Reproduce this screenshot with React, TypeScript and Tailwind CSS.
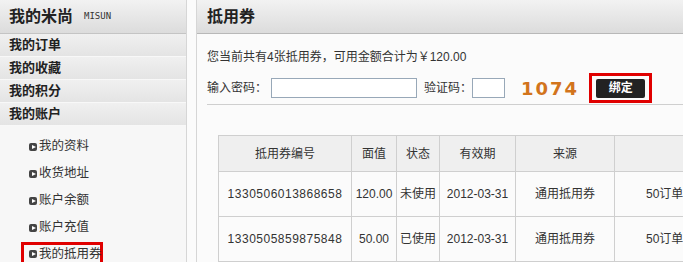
import React from "react";

const cn = '"Liberation Sans", "Noto Sans CJK SC", sans-serif';

function Bullet() {
  return (
    <span className="inline-flex items-center justify-center w-[8px] h-[8px] rounded-[2px] bg-[#444] mr-[2px] shrink-0">
      <span className="block w-0 h-0 border-y-[2.5px] border-y-transparent border-l-[4px] border-l-white ml-[1px]" />
    </span>
  );
}

function App() {
  const menus = ["我的订单", "我的收藏", "我的积分", "我的账户"];
  const subs = ["我的资料", "收货地址", "账户余额", "账户充值"];
  const rows = [
    ["1330506013868658", "120.00", "未使用", "2012-03-31", "通用抵用券", "50订单满"],
    ["1330505859875848", "50.00", "已使用", "2012-03-31", "通用抵用券", "50订单满"],
  ];

  return (
    <div className="flex h-[262px] w-[683px] overflow-hidden bg-[#fbfbfb] text-[#333]" style={{ fontFamily: cn }}>
      {/* Sidebar */}
      <div className="w-[187px] shrink-0 bg-[#f7f7f7] border-r border-[#d6d6d6]">
        <div className="h-[34px] flex items-center px-[9px] bg-gradient-to-b from-[#f2f2f2] to-[#dcdcdc] border-b border-[#c4c4c4]">
          <span className="text-[16px] font-bold text-[#222]">我的米尚</span>
          <span className="ml-[11px] text-[9px] text-[#333]" style={{ fontFamily: '"DejaVu Sans Mono", monospace' }}>MISUN</span>
        </div>
        {menus.map((m) => (
          <div
            key={m}
            className="h-[23px] flex items-center px-[9px] bg-gradient-to-b from-[#f0f0f0] to-[#e4e4e4] border-b border-[#f8f8f8] text-[13px] font-bold text-[#222]"
          >
            {m}
          </div>
        ))}
        <div className="pt-[7px] pl-[29px]">
          {subs.map((s) => (
            <div key={s} className="h-[27px] flex items-center text-[12.5px] text-[#333]">
              <Bullet />
              {s}
            </div>
          ))}
          <div className="-ml-[8px] mt-[1px] w-[82px] h-[24px] border-[3px] border-[#e00000] flex items-center pl-[5px] text-[12.5px] text-[#333] whitespace-nowrap">
            <Bullet />
            我的抵用券
          </div>
        </div>
      </div>

      <div className="w-[10px] shrink-0 bg-[#fbfbfb] border-r border-[#d6d6d6]" />

      {/* Main */}
      <div className="flex-1 min-w-0 overflow-hidden">
        <div className="h-[34px] flex items-center px-[10px] bg-gradient-to-b from-[#f2f2f2] to-[#dcdcdc] border-b border-[#b8b8b8]">
          <span className="text-[16px] font-bold text-[#222]">抵用券</span>
        </div>
        <div className="pl-[10px]">
          <div className="mt-[14px] text-[12px] text-[#333]">您当前共有4张抵用券，可用金额合计为￥120.00</div>
          <div className="mt-[12px] flex items-center h-[20px] text-[12px]">
            <span>输入密码：</span>
            <input className="ml-[4px] w-[146px] h-[20px] border border-[#98a8b8] bg-white" />
            <span className="ml-[7px]">验证码：</span>
            <input className="w-[33px] h-[20px] border border-[#98a8b8] bg-white" />
            <span className="ml-[16px] text-[18px] font-bold tracking-[2px] text-[#d2741c]" style={{ fontFamily: '"DejaVu Sans", sans-serif' }}>1074</span>
            <div className="ml-[10px] border-[3px] border-[#e00000] w-[63px] h-[30px] flex items-center justify-center">
              <span className="w-[49px] h-[19px] rounded-[2px] bg-[#222] text-white text-[12px] font-bold flex items-center justify-center">绑定</span>
            </div>
          </div>
          <div className="mt-[6px] border-t border-[#cfcfcf]" />
          <table className="mt-[30px] ml-[11px] border-collapse table-fixed w-[560px] text-[12px] text-[#333]">
            <thead>
              <tr className="h-[36px] bg-[#efefef]">
                <th className="w-[133px] border border-[#cfcfcf] font-normal">抵用券编号</th>
                <th className="w-[45px] border border-[#cfcfcf] font-normal">面值</th>
                <th className="w-[43px] border border-[#cfcfcf] font-normal">状态</th>
                <th className="w-[76px] border border-[#cfcfcf] font-normal">有效期</th>
                <th className="w-[99px] border border-[#cfcfcf] font-normal">来源</th>
                <th className="w-[164px] border border-[#cfcfcf] font-normal"></th>
              </tr>
            </thead>
            <tbody>
              {rows.map((r) => (
                <tr key={r[0]} className="h-[45px] bg-[#fbfbfb]">
                  {r.map((c, i) => (
                    <td
                      key={i}
                      className={`border border-[#cfcfcf] whitespace-nowrap overflow-hidden ${i === 5 ? "text-left pl-[31px]" : "text-center"} ${i === 0 ? "tracking-[0.5px]" : ""}`}
                    >
                      {c}
                    </td>
                  ))}
                </tr>
              ))}
            </tbody>
          </table>
        </div>
      </div>
    </div>
  );
}

export default App;
